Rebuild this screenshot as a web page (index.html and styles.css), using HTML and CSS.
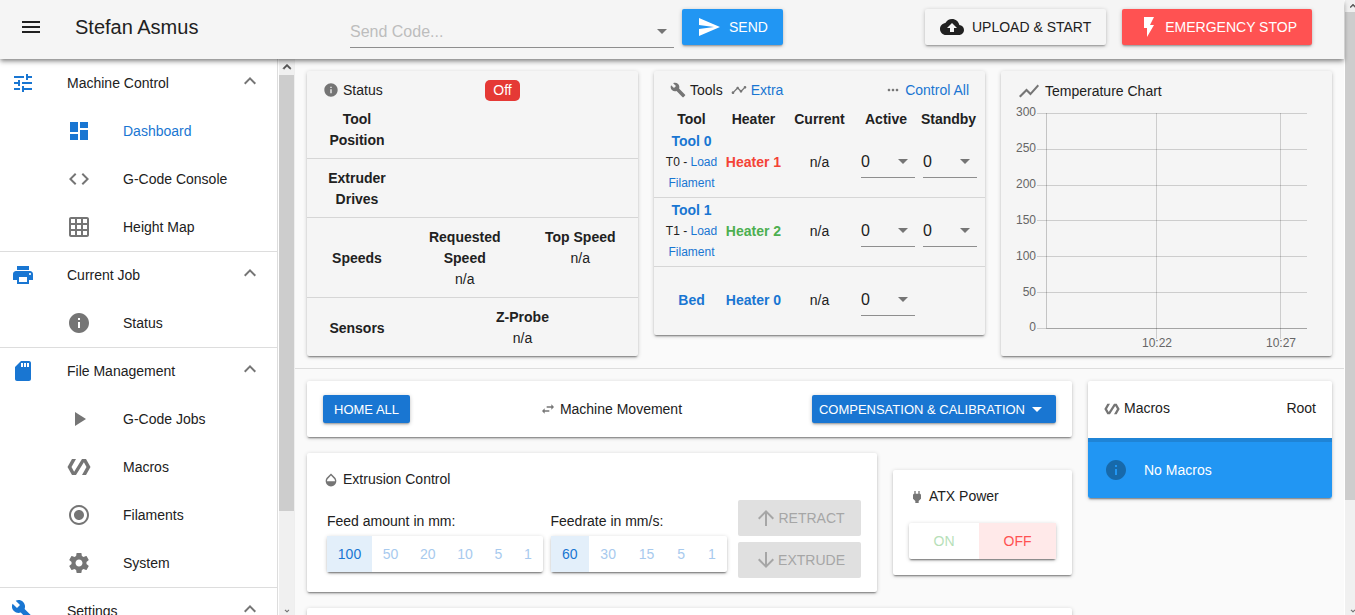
FILE: index.html
```html
<!DOCTYPE html>
<html lang="en">
<head>
<meta charset="utf-8">
<meta name="viewport" content="width=device-width, initial-scale=1">
<title>Stefan Asmus</title>
<link rel="stylesheet" href="styles.css">
</head>
<body>
<svg class="sprite" aria-hidden="true">
  <symbol id="menu" viewBox="0 0 24 24"><path d="M3 18h18v-2H3v2zm0-5h18v-2H3v2zm0-7v2h18V6H3z"/></symbol>
  <symbol id="tune" viewBox="0 0 24 24"><path d="M3 17v2h6v-2H3zM3 5v2h10V5H3zm10 16v-2h8v-2h-8v-2h-2v6h2zM7 9v2H3v2h4v2h2V9H7zm14 4v-2H11v2h10zm-6-4h2V7h4V5h-4V3h-2v6z"/></symbol>
  <symbol id="dashboard" viewBox="0 0 24 24"><path d="M3 13h8V3H3v10zm0 8h8v-6H3v6zm10 0h8V11h-8v10zm0-18v6h8V3h-8z"/></symbol>
  <symbol id="code" viewBox="0 0 24 24"><path d="M9.4 16.6L4.8 12l4.6-4.6L8 6l-6 6 6 6 1.4-1.4zm5.2 0l4.6-4.6-4.6-4.6L16 6l6 6-6 6-1.4-1.4z"/></symbol>
  <symbol id="grid" viewBox="0 0 24 24"><path d="M20 2H4c-1.1 0-2 .9-2 2v16c0 1.1.9 2 2 2h16c1.1 0 2-.9 2-2V4c0-1.1-.9-2-2-2zM8 20H4v-4h4v4zm0-6H4v-4h4v4zm0-6H4V4h4v4zm6 12h-4v-4h4v4zm0-6h-4v-4h4v4zm0-6h-4V4h4v4zm6 12h-4v-4h4v4zm0-6h-4v-4h4v4zm0-6h-4V4h4v4z"/></symbol>
  <symbol id="print" viewBox="0 0 24 24"><path d="M19 8H5c-1.66 0-3 1.34-3 3v6h4v4h12v-4h4v-6c0-1.66-1.34-3-3-3zm-3 11H8v-5h8v5zm3-7c-.55 0-1-.45-1-1s.45-1 1-1 1 .45 1 1-.45 1-1 1zm-1-9H6v4h12V3z"/></symbol>
  <symbol id="info" viewBox="0 0 24 24"><path d="M12 2C6.48 2 2 6.48 2 12s4.48 10 10 10 10-4.48 10-10S17.52 2 12 2zm1 15h-2v-6h2v6zm0-8h-2V7h2v2z"/></symbol>
  <symbol id="sd" viewBox="0 0 24 24"><path d="M18 2h-8L4.02 8 4 20c0 1.1.9 2 2 2h12c1.1 0 2-.9 2-2V4c0-1.1-.9-2-2-2zm-6 6h-2V4h2v4zm3 0h-2V4h2v4zm3 0h-2V4h2v4z"/></symbol>
  <symbol id="play" viewBox="0 0 24 24"><path d="M8 5v14l11-7z"/></symbol>
  <symbol id="polymer" viewBox="0 0 24 24"><path d="M19 4h-4L7.11 16.63 4.5 12 9 4H5L.5 12 5 20h4l7.89-12.63L19.5 12 15 20h4l4.5-8z"/></symbol>
  <symbol id="radio" viewBox="0 0 24 24"><path d="M12 7c-2.76 0-5 2.24-5 5s2.24 5 5 5 5-2.24 5-5-2.24-5-5-5zm0-5C6.48 2 2 6.48 2 12s4.480 10 10 10 10-4.480 10-10S17.520 2 12 2zm0 18c-4.420 0-8-3.580-8-8s3.580-8 8-8 8 3.580 8 8-3.580 8-8 8z"/></symbol>
  <symbol id="gear" viewBox="0 0 24 24"><path d="M19.43 12.98c.04-.32.07-.64.07-.98s-.03-.66-.07-.98l2.11-1.65c.19-.15.24-.42.12-.64l-2-3.46c-.12-.22-.39-.3-.61-.22l-2.49 1c-.52-.4-1.08-.73-1.69-.98l-.38-2.65C14.46 2.18 14.25 2 14 2h-4c-.25 0-.46.18-.49.42l-.38 2.65c-.61.25-1.17.59-1.69.98l-2.49-1c-.23-.09-.49 0-.61.22l-2 3.46c-.13.22-.07.49.12.64l2.11 1.65c-.04.32-.07.65-.07.98s.03.66.07.98l-2.11 1.65c-.19.15-.24.42-.12.64l2 3.46c.12.22.39.3.61.22l2.49-1c.52.4 1.08.73 1.69.98l.38 2.65c.03.24.24.42.49.42h4c.25 0 .46-.18.49-.42l.38-2.65c.61-.25 1.17-.59 1.69-.98l2.49 1c.23.09.49 0 .61-.22l2-3.46c.12-.22.07-.49-.12-.64l-2.11-1.65zM12 15.5c-1.93 0-3.500-1.570-3.500-3.500s1.570-3.500 3.500-3.500 3.500 1.570 3.500 3.500-1.570 3.500-3.500 3.500z"/></symbol>
  <symbol id="wrench" viewBox="0 0 24 24"><path d="M22.7 19l-9.1-9.1c.9-2.3.4-5-1.5-6.9-2-2-5-2.4-7.4-1.3L9 6 6 9 1.6 4.7C.4 7.1.9 10.1 2.9 12.1c1.9 1.9 4.6 2.4 6.9 1.5l9.1 9.1c.4.4 1 .4 1.4 0l2.3-2.3c.5-.4.5-1.1.1-1.4z"/></symbol>
  <symbol id="up" viewBox="0 0 24 24"><path d="M7.41 15.41L12 10.83l4.59 4.58L18 14l-6-6-6 6z"/></symbol>
  <symbol id="down" viewBox="0 0 24 24"><path d="M7.41 8.59L12 13.17l4.59-4.58L18 10l-6 6-6-6z"/></symbol>
  <symbol id="drop" viewBox="0 0 24 24"><path d="M7 10l5 5 5-5z"/></symbol>
  <symbol id="send" viewBox="0 0 24 24"><path d="M2.01 21L23 12 2.01 3 2 10l15 2-15 2z"/></symbol>
  <symbol id="cloud" viewBox="0 0 24 24"><path d="M19.35 10.04C18.67 6.59 15.64 4 12 4 9.11 4 6.6 5.64 5.35 8.04 2.34 8.36 0 10.91 0 14c0 3.31 2.69 6 6 6h13c2.76 0 5-2.24 5-5 0-2.64-2.05-4.78-4.65-4.96zM14 13v4h-4v-4H7l5-5 5 5h-3z"/></symbol>
  <symbol id="bolt" viewBox="0 0 24 24"><path d="M7 2v11h3v9l7-12h-4l4-8z"/></symbol>
  <symbol id="timeline" viewBox="0 0 24 24"><path d="M23 8c0 1.1-.9 2-2 2-.18 0-.35-.02-.51-.07l-3.56 3.55c.05.16.07.34.07.52 0 1.1-.9 2-2 2s-2-.9-2-2c0-.18.02-.36.07-.52l-2.55-2.55c-.16.05-.34.07-.52.07s-.36-.02-.52-.07l-4.55 4.56c.05.16.07.33.07.51 0 1.1-.9 2-2 2s-2-.9-2-2 .9-2 2-2c.18 0 .35.02.51.07l4.56-4.55C8.02 9.36 8 9.18 8 9c0-1.1.9-2 2-2s2 .9 2 2c0 .18-.02.36-.07.52l2.55 2.55c.16-.05.34-.07.52-.07s.36.02.52.07l3.55-3.56C19.02 8.35 19 8.18 19 8c0-1.1.9-2 2-2s2 .9 2 2z"/></symbol>
  <symbol id="dots" viewBox="0 0 24 24"><path d="M6 10c-1.1 0-2 .9-2 2s.9 2 2 2 2-.9 2-2-.9-2-2-2zm12 0c-1.1 0-2 .9-2 2s.9 2 2 2 2-.9 2-2-.9-2-2-2zm-6 0c-1.1 0-2 .9-2 2s.9 2 2 2 2-.9 2-2-.9-2-2-2z"/></symbol>
  <symbol id="chart" viewBox="0 0 24 24"><path d="M3.5 18.49l6-6.01 4 4L22 6.92l-1.41-1.41-7.09 7.97-4-4L2 16.99z"/></symbol>
  <symbol id="swap" viewBox="0 0 24 24"><path d="M6.99 11L3 15l3.99 4v-3H14v-2H6.99v-3zM21 9l-3.99-4v3H10v2h7.01v3L21 9z"/></symbol>
  <symbol id="opacity" viewBox="0 0 24 24"><path d="M17.66 8L12 2.35 6.34 8C4.78 9.56 4 11.64 4 13.64s.78 4.11 2.34 5.67 3.61 2.35 5.66 2.35 4.1-.79 5.66-2.35S20 15.64 20 13.64 19.22 9.56 17.66 8zM6 14c.01-2 .62-3.27 1.76-4.4L12 5.27l4.24 4.38C17.38 10.77 17.99 12 18 14H6z"/></symbol>
  <symbol id="plug" viewBox="0 0 24 24"><path d="M16.01 7L16 3h-2v4h-4V3H8v4h-.01C7 6.99 6 7.99 6 8.99v5.49L9.5 18v3h5v-3l3.5-3.51v-5.5c0-1-1-2-1.99-1.99z"/></symbol>
  <symbol id="arrow-up" viewBox="0 0 24 24"><path d="M4 12l1.41 1.41L11 7.83V20h2V7.83l5.58 5.59L20 12l-8-8-8 8z"/></symbol>
  <symbol id="arrow-down" viewBox="0 0 24 24"><path d="M20 12l-1.41-1.41L13 16.17V4h-2v12.17l-5.58-5.59L4 12l8 8 8-8z"/></symbol>
</svg>

<div class="window">
  <div class="app">
    <header class="toolbar">
      <div class="brand">
        <button class="menu-button" type="button" aria-label="Toggle menu"><svg class="icon"><use href="#menu"/></svg></button>
        <h1 class="title">Stefan Asmus</h1>
      </div>
      <div class="code-field">
        <input class="code-input" type="text" placeholder="Send Code..." aria-label="Send Code">
        <svg class="icon"><use href="#drop"/></svg>
      </div>
      <button class="button button-send" type="button"><svg class="icon"><use href="#send"/></svg>SEND</button>
      <div class="toolbar-actions">
        <button class="button" type="button"><svg class="icon"><use href="#cloud"/></svg>UPLOAD &amp; START</button>
        <button class="button button-stop" type="button"><svg class="icon"><use href="#bolt"/></svg>EMERGENCY STOP</button>
      </div>
    </header>

    <div class="body">
      <nav class="sidebar">
        <section class="nav-group">
          <button class="nav-head" type="button"><svg class="icon"><use href="#tune"/></svg><span>Machine Control</span><svg class="icon chevron"><use href="#up"/></svg></button>
          <a class="nav-item active" href="#"><svg class="icon"><use href="#dashboard"/></svg>Dashboard</a>
          <a class="nav-item" href="#"><svg class="icon"><use href="#code"/></svg>G-Code Console</a>
          <a class="nav-item" href="#"><svg class="icon"><use href="#grid"/></svg>Height Map</a>
        </section>
        <section class="nav-group">
          <button class="nav-head" type="button"><svg class="icon"><use href="#print"/></svg><span>Current Job</span><svg class="icon chevron"><use href="#up"/></svg></button>
          <a class="nav-item" href="#"><svg class="icon"><use href="#info"/></svg>Status</a>
        </section>
        <section class="nav-group">
          <button class="nav-head" type="button"><svg class="icon"><use href="#sd"/></svg><span>File Management</span><svg class="icon chevron"><use href="#up"/></svg></button>
          <a class="nav-item" href="#"><svg class="icon"><use href="#play"/></svg>G-Code Jobs</a>
          <a class="nav-item" href="#"><svg class="icon"><use href="#polymer"/></svg>Macros</a>
          <a class="nav-item" href="#"><svg class="icon"><use href="#radio"/></svg>Filaments</a>
          <a class="nav-item" href="#"><svg class="icon"><use href="#gear"/></svg>System</a>
        </section>
        <section class="nav-group">
          <button class="nav-head" type="button"><svg class="icon"><use href="#wrench"/></svg><span>Settings</span><svg class="icon chevron"><use href="#up"/></svg></button>
        </section>
      </nav>
      <div class="scrollbar nav-scroll" aria-hidden="true">
        <svg class="icon small"><use href="#up"/></svg>
        <div class="track"><div class="thumb"></div></div>
        <svg class="icon small foot"><use href="#down"/></svg>
      </div>

      <main class="main">
        <div class="overview">
          <section class="card tinted">
            <div class="card-head status-head">
              <span class="label"><svg class="icon small"><use href="#info"/></svg>Status</span>
              <span class="badge">Off</span>
            </div>
            <div class="status-row"><strong class="name">Tool Position</strong></div>
            <div class="status-row"><strong class="name">Extruder Drives</strong></div>
            <div class="status-row">
              <strong class="name">Speeds</strong>
              <div class="value"><strong>Requested Speed</strong><span>n/a</span></div>
              <div class="value"><strong>Top Speed</strong><span>n/a</span></div>
            </div>
            <div class="status-row">
              <strong class="name">Sensors</strong>
              <div class="value wide"><strong>Z-Probe</strong><span>n/a</span></div>
            </div>
          </section>

          <section class="card tinted">
            <div class="card-head">
              <span class="label"><svg class="icon small"><use href="#wrench"/></svg>Tools</span>
              <span class="label"><svg class="icon small"><use href="#timeline"/></svg><a class="link" href="#">Extra</a></span>
              <span class="label push"><svg class="icon small"><use href="#dots"/></svg><a class="link" href="#">Control All</a></span>
            </div>
            <table class="tools">
              <colgroup><col class="c-tool"><col class="c-heater"><col class="c-current"><col class="c-active"><col class="c-standby"></colgroup>
              <thead><tr><th>Tool</th><th>Heater</th><th>Current</th><th>Active</th><th>Standby</th></tr></thead>
              <tbody>
                <tr>
                  <td><a class="link strong" href="#">Tool 0</a><div class="filament">T0 - <a class="link" href="#">Load Filament</a></div></td>
                  <td><a class="strong red" href="#">Heater 1</a></td>
                  <td>n/a</td>
                  <td><span class="temp"><select aria-label="Tool 0 active"><option>0</option></select><svg class="icon"><use href="#drop"/></svg></span></td>
                  <td><span class="temp"><select aria-label="Tool 0 standby"><option>0</option></select><svg class="icon"><use href="#drop"/></svg></span></td>
                </tr>
                <tr>
                  <td><a class="link strong" href="#">Tool 1</a><div class="filament">T1 - <a class="link" href="#">Load Filament</a></div></td>
                  <td><a class="strong green" href="#">Heater 2</a></td>
                  <td>n/a</td>
                  <td><span class="temp"><select aria-label="Tool 1 active"><option>0</option></select><svg class="icon"><use href="#drop"/></svg></span></td>
                  <td><span class="temp"><select aria-label="Tool 1 standby"><option>0</option></select><svg class="icon"><use href="#drop"/></svg></span></td>
                </tr>
                <tr>
                  <td><a class="link strong" href="#">Bed</a></td>
                  <td><a class="link strong" href="#">Heater 0</a></td>
                  <td>n/a</td>
                  <td><span class="temp"><select aria-label="Bed active"><option>0</option></select><svg class="icon"><use href="#drop"/></svg></span></td>
                  <td></td>
                </tr>
              </tbody>
            </table>
          </section>

          <section class="card tinted">
            <div class="card-head chart-head"><span class="label"><svg class="icon"><use href="#chart"/></svg>Temperature Chart</span></div>
            <svg class="plot" viewBox="0 0 331 251" role="img" aria-label="Temperature Chart">
              <path class="rule" d="M36 8.500H306M36 44.500H306M36 80.500H306M36 115.500H306M36 151.500H306M36 187.500H306M36 223.500H306"/>
              <path class="rule" d="M155.500 8V234M279.500 8V234"/>
              <path class="axis" d="M45.500 8V223M45 223.500H306"/>
              <g class="y-labels">
                <text x="35" y="11">300</text><text x="35" y="47">250</text><text x="35" y="83">200</text><text x="35" y="119">150</text><text x="35" y="155">100</text><text x="35" y="191">50</text><text x="35" y="226">0</text>
              </g>
              <g class="x-labels"><text x="156" y="242">10:22</text><text x="280" y="242">10:27</text></g>
            </svg>
          </section>
        </div>

        <div class="controls">
          <div class="control-column">
            <section class="card movement">
              <button class="button compact primary" type="button">HOME ALL</button>
              <span class="label"><svg class="icon small"><use href="#swap"/></svg>Machine Movement</span>
              <button class="button compact primary" type="button">COMPENSATION &amp; CALIBRATION<svg class="icon"><use href="#drop"/></svg></button>
            </section>
            <div class="panels">
              <section class="card extrusion">
                <span class="label"><svg class="icon small"><use href="#opacity"/></svg>Extrusion Control</span>
                <div class="extrusion-row">
                  <div class="choice">
                    <span id="amount">Feed amount in mm:</span>
                    <div class="toggle" role="group" aria-labelledby="amount">
                      <button class="on" type="button">100</button><button type="button">50</button><button type="button">20</button><button type="button">10</button><button type="button">5</button><button type="button">1</button>
                    </div>
                  </div>
                  <div class="choice">
                    <span id="rate">Feedrate in mm/s:</span>
                    <div class="toggle" role="group" aria-labelledby="rate">
                      <button class="on" type="button">60</button><button type="button">30</button><button type="button">15</button><button type="button">5</button><button type="button">1</button>
                    </div>
                  </div>
                  <div class="feed-buttons">
                    <button class="button" type="button" disabled><svg class="icon"><use href="#arrow-up"/></svg>RETRACT</button>
                    <button class="button" type="button" disabled><svg class="icon"><use href="#arrow-down"/></svg>EXTRUDE</button>
                  </div>
                </div>
              </section>
              <section class="card power">
                <span class="label"><svg class="icon small"><use href="#plug"/></svg>ATX Power</span>
                <div class="toggle" role="group" aria-label="ATX Power">
                  <button class="power-on" type="button">ON</button><button class="power-off on" type="button">OFF</button>
                </div>
              </section>
            </div>
            <section class="card next-card"></section>
          </div>

          <section class="card macros">
            <div class="macros-head"><span class="label"><svg class="icon small"><use href="#polymer"/></svg>Macros</span><span>Root</span></div>
            <div class="notice"><svg class="icon"><use href="#info"/></svg>No Macros</div>
          </section>
        </div>
      </main>
    </div>
  </div>
  <div class="scrollbar page-scroll" aria-hidden="true">
    <svg class="icon small"><use href="#up"/></svg>
    <div class="track"><div class="thumb"></div></div>
    <svg class="icon small foot"><use href="#down"/></svg>
  </div>
</div>
</body>
</html>
```

FILE: styles.css
```css
*, *::before, *::after { box-sizing: border-box; }

body {
  margin: 0;
  font: 14px/21px "Liberation Sans", Arial, sans-serif;
  color: #212121;
  background: #fafafa;
}

button, input, select { font: inherit; color: inherit; }
button { border: 0; background: none; cursor: pointer; }
a { text-decoration: none; color: inherit; }

.sprite { display: none; }
.icon { width: 24px; height: 24px; flex: none; fill: currentColor; }
.icon.small { width: 16px; height: 16px; }

.window { display: flex; height: 100vh; overflow: hidden; }
.app { flex: 1; min-width: 0; display: flex; flex-direction: column; }

/* Toolbar */
.toolbar {
  z-index: 1;
  display: flex;
  align-items: flex-start;
  padding: 9px 32px 11px 0;
  background: #f5f5f5;
  box-shadow: 0 2px 4px -1px rgba(0, 0, 0, .35), 0 3px 5px rgba(0, 0, 0, .25);
}
.brand { display: flex; align-items: center; width: 350px; height: 36px; }
.menu-button { width: 24px; height: 24px; margin: 0 32px 0 19px; padding: 0; }
.title { margin: 0; font-size: 20px; font-weight: 400; }
.code-field {
  display: flex;
  align-items: center;
  width: 324px;
  height: 33px;
  margin: 6px 8px 0 0;
  border-bottom: 1px solid #8e8e8e;
  color: #757575;
}
.code-input { flex: 1; min-width: 0; padding: 0; border: 0; outline: 0; background: none; font-size: 16px; }
.code-input::placeholder { color: #bdbdbd; opacity: 1; }
.toolbar-actions { display: flex; gap: 16px; margin-left: auto; }

.button {
  display: flex;
  align-items: center;
  justify-content: center;
  gap: 8px;
  height: 36px;
  padding: 0 15px;
  border-radius: 2px;
  background: #f5f5f5;
  box-shadow: 0 2px 2px -1px rgba(0, 0, 0, .3), 0 1px 4px rgba(0, 0, 0, .22);
  white-space: nowrap;
}
.button-send { background: #2196f3; color: #fff; }
.button-stop { gap: 4px; background: #ff5252; color: #fff; }
.button.primary { background: #1976d2; color: #fff; }
.button.compact { height: 28px; padding: 0 11px; gap: 0; font-size: 13px; }
.button.compact:last-child { padding: 0 7px; }
.button:disabled { gap: 0; padding: 0 16px; background: #e0e0e0; color: #a6a6a6; box-shadow: none; }

/* Sidebar */
.body { flex: 1; min-height: 0; display: flex; }
.sidebar { width: 278px; overflow: hidden; background: #fff; border-right: 1px solid #ddd; }
.nav-group + .nav-group { box-shadow: inset 0 1px #ddd; }
.nav-head, .nav-item { display: flex; align-items: center; width: 100%; height: 48px; text-align: left; }
.nav-head { gap: 32px; padding: 0 15px 0 11px; }
.nav-head span { flex: 1; }
.nav-head .icon { color: #1976d2; }
.nav-head .chevron { height: 28px; padding-bottom: 4px; color: #757575; }
.nav-item { gap: 32px; padding-left: 67px; }
.nav-item .icon { color: #757575; }
.nav-item.active, .nav-item.active .icon { color: #1976d2; }

.scrollbar { display: flex; flex-direction: column; background: #f0f0f0; color: #505050; }
.scrollbar .track { flex: 1; }
.scrollbar .thumb { background: #cdcdcd; }
.scrollbar .icon { stroke: currentColor; }
.nav-scroll { width: 17px; align-items: center; border-left: 1px solid #fff; border-right: 1px solid #eee; }
.nav-scroll .track { width: 100%; }
.nav-scroll .thumb { height: 82%; }
.nav-scroll .foot { height: 8px; }
.page-scroll { width: 11px; overflow: hidden; border-left: 1px solid #fff; }
.page-scroll .icon { height: 12px; }
.page-scroll .foot { height: 8px; }
.page-scroll .thumb { height: 82%; }

/* Cards */
.main { flex: 1; min-width: 0; overflow: hidden; }
.card {
  border-radius: 2px;
  background: #fff;
  box-shadow: 0 2px 2px -1px rgba(0, 0, 0, .45), 0 1px 4px rgba(0, 0, 0, .2);
}
.card.tinted { background: #f5f5f5; }
.label { display: flex; align-items: center; gap: 4px; white-space: nowrap; }
.label .icon { color: #757575; }
.link { color: #1976d2; }
.strong { font-weight: 700; }
.red { color: #f44336; }
.green { color: #4caf50; }

.overview {
  display: grid;
  grid-template-columns: repeat(3, minmax(0, 1fr));
  align-items: start;
  gap: 16px;
  padding: 12px;
  border-bottom: 1px solid #ddd;
}
.card-head { display: flex; align-items: center; gap: 8px; height: 38px; padding: 0 16px; }
.push { margin-left: auto; }

.status-head { display: grid; grid-template-columns: 1fr auto 1fr; }
.badge { margin-left: 60px; padding: 0 8px; border-radius: 5px; background: #e53935; color: #fff; }
.status-row {
  display: grid;
  grid-template-columns: 100px 1fr 1fr;
  align-items: center;
  padding: 9px 0 7px;
  border-top: 1px solid #d6d6d6;
  text-align: center;
}
.status-head + .status-row { padding-top: 0; border-top: 0; }
.status-row .name { padding: 0 16px; }
.value { display: flex; flex-direction: column; align-self: start; }
.value strong { padding: 0 8px; }
.value.wide { grid-column: span 2; }

.tools { width: 100%; table-layout: fixed; border-collapse: collapse; text-align: center; }
.c-tool { width: 69px; }
.c-heater { width: 61px; }
.c-current { width: 71px; }
.c-active { width: 62px; }
.c-standby { width: 68px; }
.tools th, .tools td { padding: 0; white-space: nowrap; }
.tools th { height: 20px; line-height: 20px; }
.tools td { height: 69px; }
.tools tr:first-child td { height: 68px; }
.tools td:first-child { white-space: normal; }
.tools th:first-child, .tools td:first-child { padding-left: 6px; }
.tools th:last-child { padding-right: 5px; }
.tools tbody tr + tr { border-top: 1px solid #d6d6d6; }
.filament { font-size: 12px; }
.temp {
  display: grid;
  align-items: center;
  width: 54px;
  height: 30px;
  margin-left: 6px;
  padding-bottom: 2px;
  border-bottom: 1px solid #8e8e8e;
  font-size: 16px;
}
.temp select, .temp .icon { grid-area: 1 / 1; }
.temp select { width: 100%; padding: 0; border: 0; outline: 0; background: none; appearance: none; }
.temp .icon { justify-self: end; color: #757575; pointer-events: none; }

.chart-head { height: 34px; padding-top: 6px; }
.plot { display: block; width: 100%; font-size: 12px; fill: #666; }
.rule { stroke: rgba(0, 0, 0, .16); }
.axis { stroke: rgba(0, 0, 0, .2); }
.y-labels { text-anchor: end; }
.x-labels { text-anchor: middle; }

/* Controls */
.controls {
  display: grid;
  grid-template-columns: minmax(0, 765fr) minmax(0, 244fr);
  align-items: start;
  gap: 16px;
  padding: 12px;
}
.control-column { display: grid; gap: 16px; }
.movement { display: flex; align-items: center; justify-content: space-between; height: 56px; padding: 0 16px; }
.panels { display: grid; grid-template-columns: minmax(0, 570fr) minmax(0, 179fr); align-items: center; gap: 16px; }
.extrusion { padding: 16px 16px 14px; }
.extrusion-row {
  display: grid;
  grid-template-columns: 216fr 177fr auto;
  align-items: end;
  gap: 8px;
  margin-top: 10px;
  padding-left: 4px;
}
.choice { display: grid; gap: 4px; padding-bottom: 6px; }
.feed-buttons { display: grid; gap: 6px; padding-left: 3px; }
.toggle { display: flex; height: 36px; border-radius: 2px; background: #fff; color: #a8caee; box-shadow: 0 2px 2px -1px rgba(0, 0, 0, .5), 0 1px 4px rgba(0, 0, 0, .2); }
.toggle button { flex: 1 0 auto; padding: 0 10px; }
.toggle .on { background: #e3effa; color: #1976d2; }
.power { padding: 16px; }
.power .toggle { margin-top: 16px; }
.toggle .power-on { color: #b7dfb9; }
.toggle .power-off { background: #ffe9e9; color: #ff5252; }
.next-card { height: 56px; }

.macros { overflow: hidden; }
.macros-head { display: flex; align-items: center; justify-content: space-between; height: 57px; padding: 0 16px 2px; }
.notice {
  display: flex;
  align-items: center;
  gap: 16px;
  height: 60px;
  padding: 0 16px;
  border-top: 4px solid #1f84d6;
  background: #2196f3;
  color: #fff;
}
.notice .icon { color: #1769aa; }
```
